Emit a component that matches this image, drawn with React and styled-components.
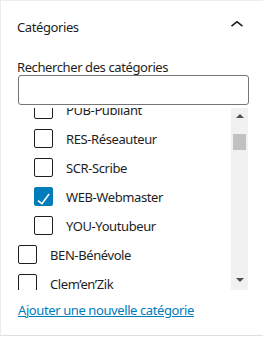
import React, { useLayoutEffect, useRef } from "react"
import styled, { createGlobalStyle } from "styled-components"

const GlobalStyle = createGlobalStyle`
  html, body {
    margin: 0;
    background: #fff;
  }
  body {
    font-family: "Noto Sans", "Open Sans", sans-serif;
    letter-spacing: -0.4px;
    color: #1e1e1e;
  }
`

const Panel = styled.div`
  width: 262px;
  height: 334px;
  border-left: 1px solid #ececec;
  border-top: 1px solid #ececec;
  border-bottom: 1px solid #e0e0e0;
  background: #fff;
`

const Header = styled.div`
  height: 52px;
  display: flex;
  align-items: center;
  justify-content: space-between;
  padding: 0 13px 0 16px;
`

const Title = styled.h2`
  margin: 0;
  font-size: 13px;
  font-weight: 400;
  line-height: 18px;
  color: #1e1e1e;
`

const Toggle = styled.button`
  border: none;
  background: none;
  padding: 0;
  width: 26px;
  height: 26px;
  margin-bottom: 5px;
  display: flex;
  cursor: pointer;
  svg {
    width: 26px;
    height: 26px;
    fill: #1e1e1e;
  }
`

const Body = styled.div`
  padding: 7px 14px 0 16px;
`

const Label = styled.label`
  display: block;
  font-size: 13px;
  line-height: 15px;
`

const SearchInput = styled.input`
  display: block;
  box-sizing: border-box;
  width: 231px;
  height: 30px;
  margin: 0 0 0 1px;
  border: 1px solid #757575;
  border-radius: 3px;
  padding: 0 8px;
  font: inherit;
`

const ListWrap = styled.div`
  margin-top: 3px;
  width: 231px;
  height: 182px;
  display: flex;
`

const Viewport = styled.div`
  flex: 1;
  overflow: hidden;
`

const ScrollBar = styled.div`
  flex: none;
  width: 17px;
  background: #f1f1f1;
  display: flex;
  flex-direction: column;
`

const ScrollButton = styled.div`
  flex: none;
  height: 17px;
  box-sizing: border-box;
  padding-top: ${(props) => (props.$down ? "5px" : "6px")};
  display: flex;
  justify-content: center;
`

const Arrow = styled.span`
  width: 0;
  height: 0;
  border-left: 4px solid transparent;
  border-right: 4px solid transparent;
  ${(props) =>
    props.$down ? "border-top: 4px solid #505050;" : "border-bottom: 4px solid #505050;"}
`

const Track = styled.div`
  flex: 1;
  padding-top: 9px;
`

const Thumb = styled.div`
  height: 16px;
  margin: 0 2px;
  background: #c1c1c1;
`

const Row = styled.div`
  display: flex;
  align-items: center;
  height: 19px;
  margin-bottom: 10px;
  padding-left: ${(props) => (props.$child ? "17px" : "1px")};
  font-size: 13px;
  color: #1e1e1e;
  white-space: nowrap;
`

const Box = styled.span`
  box-sizing: border-box;
  flex: none;
  width: 19px;
  height: 19px;
  margin-right: 13px;
  border: 1px solid ${(props) => (props.$checked ? "#007cba" : "#1e1e1e")};
  border-radius: 2px;
  background: ${(props) => (props.$checked ? "#007cba" : "#fff")};
  display: flex;
  svg {
    width: 100%;
    height: 100%;
    fill: #fff;
  }
`

const AddLink = styled.a`
  display: inline-block;
  margin: 11px 0 0 1px;
  font-size: 13px;
  line-height: 18px;
  color: #007cba;
  text-decoration: underline;
`

const terms = [
  { name: "Adhérent" },
  { name: "ANI-Animateur", child: true },
  { name: "MOD-Modérateur", child: true },
  { name: "PUB-Publiant", child: true },
  { name: "RES-Réseauteur", child: true },
  { name: "SCR-Scribe", child: true },
  { name: "WEB-Webmaster", child: true, checked: true },
  { name: "YOU-Youtubeur", child: true },
  { name: "BEN-Bénévole" },
  { name: "Clem’en’Zik" },
  { name: "Communication" },
  { name: "Concerts" },
  { name: "Conférences" },
  { name: "Culture" },
  { name: "Danse" },
  { name: "Éducation" },
  { name: "Environnement" },
  { name: "Événements" },
  { name: "Expositions" },
  { name: "Festival" },
  { name: "Formations" },
  { name: "Jeunesse" },
]

const Check = () => (
  <svg viewBox="4 2 16 16" aria-hidden="true">
    <path d="M16.7 7.1l-6.3 8.5-3.2-2.4-.9 1.2 4.4 3.3 7.2-9.7z" />
  </svg>
)

const ChevronUp = () => (
  <svg viewBox="0 0 24 24" aria-hidden="true">
    <path d="M6.5 12.4L12 8l5.5 4.4-.9 1.2L12 10l-4.6 3.6-1-1.2z" />
  </svg>
)

const App = () => {
  const listRef = useRef(null)

  useLayoutEffect(() => {
    if (listRef.current) listRef.current.scrollTop = 95
  }, [])

  return (
    <>
      <GlobalStyle />
      <Panel>
        <Header>
          <Title>Catégories</Title>
          <Toggle aria-label="Fermer">
            <ChevronUp />
          </Toggle>
        </Header>
        <Body>
          <Label htmlFor="cat-search">Rechercher des catégories</Label>
          <SearchInput id="cat-search" type="search" />
          <ListWrap>
            <Viewport ref={listRef}>
              {terms.map((term) => (
                <Row key={term.name} $child={term.child}>
                  <Box $checked={term.checked}>{term.checked && <Check />}</Box>
                  {term.name}
                </Row>
              ))}
            </Viewport>
            <ScrollBar aria-hidden="true">
              <ScrollButton>
                <Arrow />
              </ScrollButton>
              <Track>
                <Thumb />
              </Track>
              <ScrollButton $down>
                <Arrow $down />
              </ScrollButton>
            </ScrollBar>
          </ListWrap>
          <AddLink href="#">Ajouter une nouvelle catégorie</AddLink>
        </Body>
      </Panel>
    </>
  )
}

export default App
